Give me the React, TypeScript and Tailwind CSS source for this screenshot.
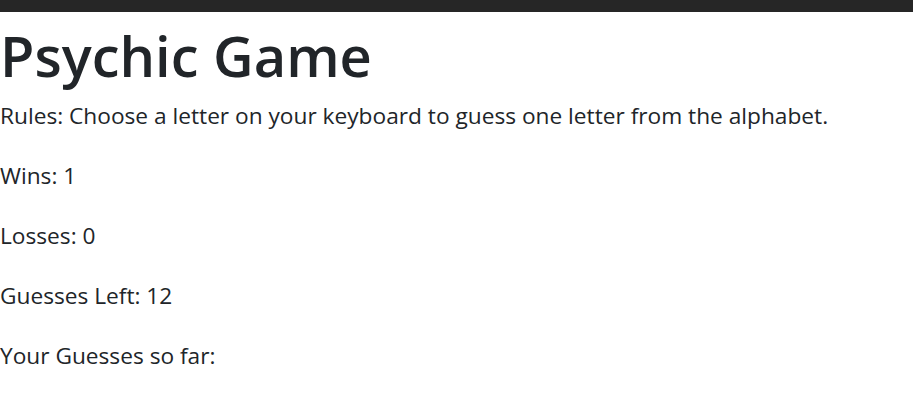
export default function App() {
  const lines = ["Wins: 1", "Losses: 0", "Guesses Left: 12", "Your Guesses so far:"];
  return (
    <div className="min-h-screen bg-white text-[#212529]" style={{ fontFamily: '"Open Sans", "Noto Sans", sans-serif' }}>
      <div className="h-[12px] bg-[#262626]" />
      <h1 className="mt-[7px] text-[56px] leading-[72px] font-semibold">Psychic Game</h1>
      <div className="mt-[7px] flex flex-col gap-[24px] text-[22.7px] leading-[36px]">
        <p>Rules: Choose a letter on your keyboard to guess one letter from the alphabet.</p>
        {lines.map((l) => (
          <p key={l}>{l}</p>
        ))}
      </div>
    </div>
  );
}
